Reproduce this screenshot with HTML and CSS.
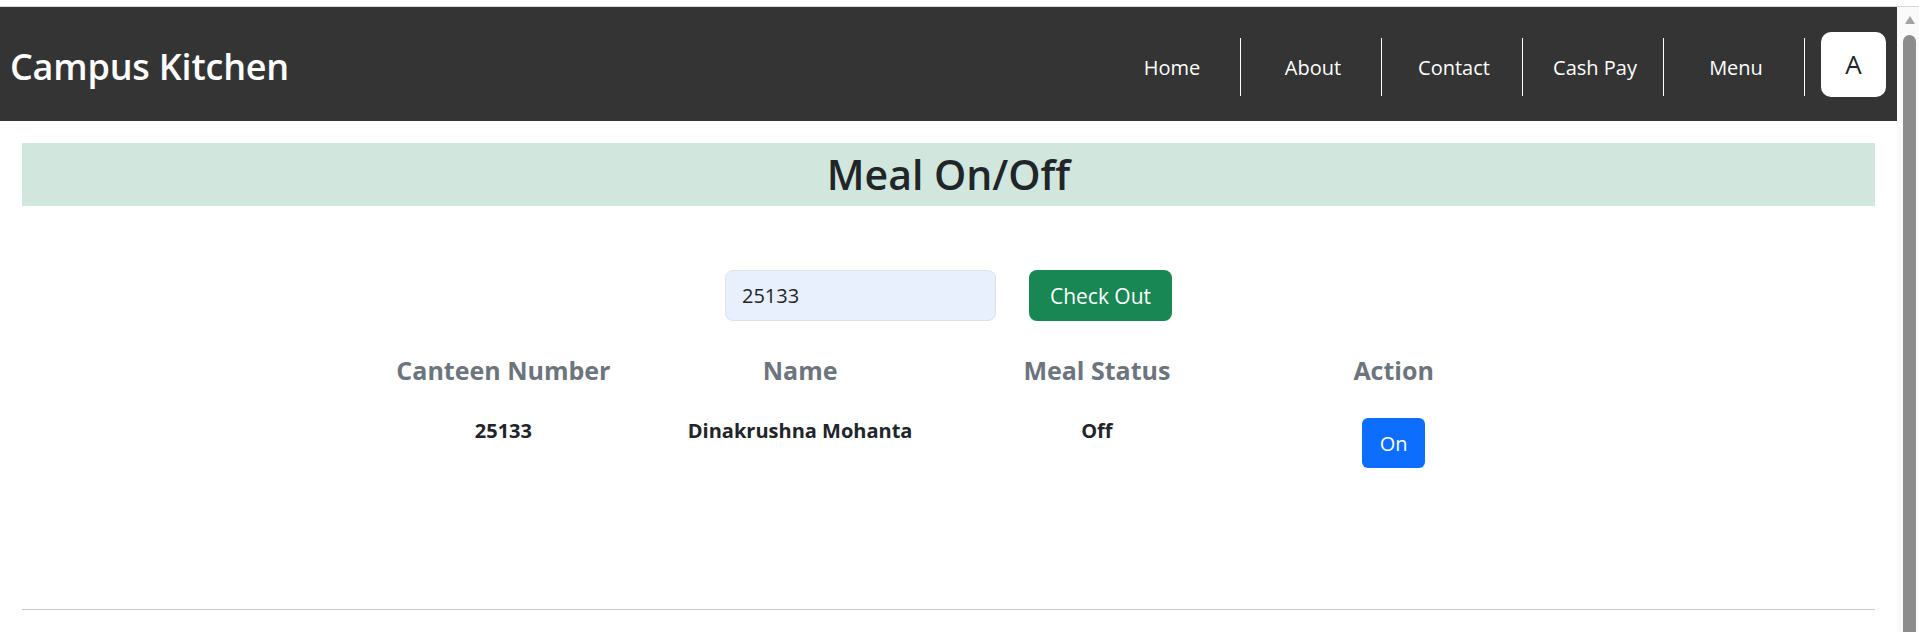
FILE: index.html
```html
<!DOCTYPE html>
<html lang="en">
<head>
<meta charset="utf-8">
<title>Campus Kitchen - Meal On/Off</title>
<link rel="stylesheet" href="styles.css">
</head>
<body>
<div class="topline"></div>
<div class="window">
  <div class="page">
    <nav class="navbar">
      <div class="brand">Campus Kitchen</div>
      <ul class="nav">
        <li><a href="#">Home</a></li>
        <li><a href="#">About</a></li>
        <li><a href="#">Contact</a></li>
        <li><a href="#">Cash Pay</a></li>
        <li><a href="#">Menu</a></li>
      </ul>
      <button class="avatar" type="button">A</button>
    </nav>
    <main class="content">
      <h1 class="title-bar">Meal On/Off</h1>
      <form class="search">
        <input class="search-input" type="text" value="25133">
        <button class="btn btn-success" type="button">Check Out</button>
      </form>
      <table class="meal-table">
        <thead>
          <tr>
            <th>Canteen Number</th>
            <th>Name</th>
            <th>Meal Status</th>
            <th>Action</th>
          </tr>
        </thead>
        <tbody>
          <tr>
            <td>25133</td>
            <td>Dinakrushna Mohanta</td>
            <td>Off</td>
            <td><button class="btn btn-primary" type="button">On</button></td>
          </tr>
        </tbody>
      </table>
      <hr class="divider">
    </main>
  </div>
  <div class="scrollbar">
    <span class="arrow"></span>
    <span class="thumb"></span>
  </div>
</div>
</body>
</html>
```

FILE: styles.css
```css
* { box-sizing: border-box; }

html, body {
  margin: 0;
  padding: 0;
  height: 632px;
  overflow: hidden;
  background: #ffffff;
  font-family: "Open Sans", "Noto Sans", "Liberation Sans", sans-serif;
  color: #212529;
}

.topline {
  height: 7px;
  background: #ffffff;
  border-bottom: 1px solid #d6d6d6;
}

.window {
  display: flex;
  height: 625px;
}

.page {
  flex: 1;
  min-width: 0;
}

/* NAVBAR */
.navbar {
  height: 114px;
  background: #343434;
  display: flex;
  align-items: center;
  padding: 0 11px 0 10px;
}

.brand {
  color: #ffffff;
  font-size: 36px;
  font-weight: 600;
  line-height: 1;
  margin-top: 6px;
  letter-spacing: -0.2px;
}

.nav {
  list-style: none;
  margin: 6px 0 0 auto;
  padding: 0;
  display: flex;
}

.nav li {
  width: 141px;
  height: 58px;
  border-right: 1px solid #ffffff;
  display: flex;
  align-items: center;
  justify-content: center;
}

.nav a {
  color: #ffffff;
  text-decoration: none;
  font-size: 20px;
  padding-left: 4px;
}

.avatar {
  width: 65px;
  height: 65px;
  margin-left: 16px;
  border: none;
  border-radius: 10px;
  background: #ffffff;
  color: #212529;
  font-family: inherit;
  font-size: 26px;
  line-height: 1;
  padding: 0;
}

/* CONTENT */
.content {
  padding: 22px 22px 0 22px;
}

.title-bar {
  margin: 0;
  height: 63px;
  line-height: 63px;
  background: #d1e7dd;
  text-align: center;
  font-size: 41px;
  font-weight: 600;
  color: #212529;
}

.search {
  margin: 64px 0 0 0;
  display: flex;
  justify-content: center;
  gap: 33px;
}

.search-input {
  width: 271px;
  height: 51px;
  border: 1px solid #dee2e6;
  border-radius: 8px;
  background: #e8f0fe;
  padding: 0 16px;
  font-family: inherit;
  font-size: 20px;
  color: #212529;
}

.btn {
  border: none;
  font-family: inherit;
  color: #ffffff;
  cursor: pointer;
}

.btn-success {
  width: 143px;
  height: 51px;
  border-radius: 8px;
  background: #198754;
  font-size: 21px;
}

.btn-primary {
  width: 63px;
  height: 50px;
  border-radius: 6px;
  background: #0d6efd;
  font-size: 20px;
  margin-top: 2px;
}

.meal-table {
  width: 1187px;
  margin: 26px auto 0 auto;
  border-collapse: collapse;
  table-layout: fixed;
  text-align: center;
}

.meal-table th {
  height: 46px;
  padding: 0;
  font-size: 25px;
  font-weight: 700;
  color: #6c757d;
  vertical-align: middle;
}

.meal-table td {
  padding: 23px 0 0 0;
  font-size: 20px;
  font-weight: 700;
  line-height: 30px;
  vertical-align: top;
  color: #212529;
}

.divider {
  margin: 141px 0 0 0;
  border: none;
  border-top: 1px solid #c8c9ca;
}

/* SCROLLBAR */
.scrollbar {
  width: 22px;
  background: #fafafa;
  display: flex;
  flex-direction: column;
  align-items: center;
  padding-left: 3px;
}

.arrow {
  margin-top: 9px;
  width: 0;
  height: 0;
  border-left: 5px solid transparent;
  border-right: 5px solid transparent;
  border-bottom: 8px solid #a3a3a3;
}

.thumb {
  margin-top: 11px;
  width: 13px;
  flex: 1;
  background: #8c8c8c;
  border-radius: 7px 7px 0 0;
}
```
